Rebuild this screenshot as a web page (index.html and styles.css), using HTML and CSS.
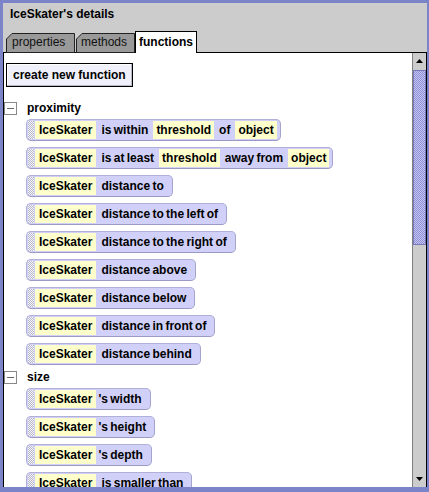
FILE: index.html
```html
<!DOCTYPE html>
<html>
<head>
<meta charset="utf-8">
<link rel="stylesheet" href="styles.css">
</head>
<body>
<div class="window">
  <div class="header">
    <div class="title">IceSkater's details</div>
    <div class="tabs">
      <div class="tab tab-props">
        <svg class="tab-shape" viewBox="0 0 69 19" preserveAspectRatio="none"><polygon points="0.5,19.5 0.5,6 6,0.5 68.5,0.5 68.5,19.5" fill="#999999" stroke="#222222" stroke-width="1"/></svg>
        <span class="tab-label">properties</span>
      </div>
      <div class="tab tab-methods">
        <svg class="tab-shape" viewBox="0 0 59 19" preserveAspectRatio="none"><polygon points="0.5,19.5 0.5,6 6,0.5 58.5,0.5 58.5,19.5" fill="#999999" stroke="#222222" stroke-width="1"/></svg>
        <span class="tab-label">methods</span>
      </div>
      <div class="tab-active">functions</div>
    </div>
  </div>
  <div class="panel">
    <div class="main">
      <button class="create">create new function</button>

      <div class="group">
        <div class="group-head first"><span class="toggle"><span class="minus"></span></span><span>proximity</span></div>
        <div class="blocks">
          <div class="block"><span class="grip"></span><span class="tile">IceSkater</span><span class="lbl">is within</span><span class="tile">threshold</span><span class="lbl">of</span><span class="tile">object</span></div>
          <div class="block"><span class="grip"></span><span class="tile">IceSkater</span><span class="lbl">is at least</span><span class="tile">threshold</span><span class="lbl">away from</span><span class="tile">object</span></div>
          <div class="block"><span class="grip"></span><span class="tile">IceSkater</span><span class="lbl">distance to</span></div>
          <div class="block"><span class="grip"></span><span class="tile">IceSkater</span><span class="lbl">distance to the left of</span></div>
          <div class="block"><span class="grip"></span><span class="tile">IceSkater</span><span class="lbl">distance to the right of</span></div>
          <div class="block"><span class="grip"></span><span class="tile">IceSkater</span><span class="lbl">distance above</span></div>
          <div class="block"><span class="grip"></span><span class="tile">IceSkater</span><span class="lbl">distance below</span></div>
          <div class="block"><span class="grip"></span><span class="tile">IceSkater</span><span class="lbl">distance in front of</span></div>
          <div class="block"><span class="grip"></span><span class="tile">IceSkater</span><span class="lbl">distance behind</span></div>
        </div>
      </div>

      <div class="group">
        <div class="group-head"><span class="toggle"><span class="minus"></span></span><span>size</span></div>
        <div class="blocks">
          <div class="block"><span class="grip"></span><span class="tile">IceSkater</span><span class="lbl poss">'s width</span></div>
          <div class="block"><span class="grip"></span><span class="tile">IceSkater</span><span class="lbl poss">'s height</span></div>
          <div class="block"><span class="grip"></span><span class="tile">IceSkater</span><span class="lbl poss">'s depth</span></div>
          <div class="block"><span class="grip"></span><span class="tile">IceSkater</span><span class="lbl">is smaller than</span></div>
        </div>
      </div>
    </div>
    <div class="scrollbar">
      <div class="sb-btn"><svg width="7" height="4" viewBox="0 0 7 4"><polygon points="3.5,0 7,4 0,4" fill="#000"/></svg></div>
      <div class="sb-thumb"></div>
      <div class="sb-track"></div>
      <div class="sb-btn"><svg width="7" height="4" viewBox="0 0 7 4"><polygon points="0,0 7,0 3.5,4" fill="#000"/></svg></div>
    </div>
  </div>
</div>
</body>
</html>
```

FILE: styles.css
```css
html, body {
  margin: 0;
  padding: 0;
}
body {
  background: #7b83c9;
  width: 429px;
  height: 492px;
  overflow: hidden;
  font-family: "Liberation Sans", Arial, sans-serif;
  font-size: 12px;
  color: #000;
}
.window {
  margin: 3px 0 0 3px;
  width: 424px;
  height: 484px;
  display: flex;
  flex-direction: column;
  background: #cccccc;
}
.header {
  height: 49px;
  display: flex;
  flex-direction: column;
  flex: none;
}
.title {
  font-weight: bold;
  padding: 4px 0 0 7px;
  line-height: 14px;
}
.tabs {
  margin-top: auto;
  display: flex;
  align-items: flex-end;
  padding-left: 3px;
  height: 22px;
}
.tab {
  position: relative;
  height: 19px;
  line-height: 19px;
  box-sizing: border-box;
}
.tab-props { width: 69px; padding-left: 6px; }
.tab-methods { width: 59px; padding-left: 5px; margin-left: 1px; }
.tab-shape {
  position: absolute;
  left: 0;
  top: 0;
  width: 100%;
  height: 100%;
  overflow: visible;
}
.tab-label {
  position: relative;
  color: #111;
}
.tab-active {
  position: relative;
  z-index: 1;
  width: 62px;
  height: 22px;
  margin-bottom: -1px;
  box-sizing: border-box;
  background: #fff;
  border: 1px solid #000;
  border-bottom: none;
  font-weight: bold;
  text-align: center;
  line-height: 21px;
}
.panel {
  flex: 1;
  min-height: 0;
  display: flex;
  background: #fff;
  border-top: 1px solid #000;
  border-left: 1px solid #000;
  border-right: 1px solid #000;
}
.main {
  flex: 1;
  overflow: hidden;
  padding-top: 10px;
}
.create {
  display: block;
  margin: 0 0 0 2px;
  height: 24px;
  padding: 0 6px;
  border: 1px solid #000;
  background: #f0f0fa;
  font-family: "Liberation Sans", Arial, sans-serif;
  font-weight: bold;
  font-size: 12px;
  color: #000;
  box-shadow: inset -1px -1px 0 #b8b8c8, inset 1px 1px 0 #ffffff;
}
.group-head {
  height: 22px;
  display: flex;
  align-items: center;
  font-weight: bold;
  margin-top: 1px;
}
.group-head.first {
  margin-top: 10px;
}
.toggle {
  width: 13px;
  height: 13px;
  box-sizing: border-box;
  border: 1px solid #888;
  background: #fff;
  margin-right: 10px;
  display: flex;
  align-items: center;
  justify-content: center;
}
.minus {
  width: 7px;
  height: 1px;
  background: #666;
}
.blocks {
  display: flex;
  flex-direction: column;
  align-items: flex-start;
  gap: 6px;
  padding-left: 22px;
}
.block {
  height: 22px;
  box-sizing: border-box;
  display: flex;
  align-items: center;
  padding: 0 3px 0 1px;
  border: 1px solid #b0b0d8;
  border-bottom-color: #9a9ac4;
  border-right-color: #a4a4cc;
  border-radius: 5px;
  background: #d0d0f8;
  white-space: nowrap;
  font-weight: bold;
}
.grip {
  width: 6px;
  height: 18px;
  margin-right: 1px;
  background: repeating-conic-gradient(#b8b8c8 0 25%, #f4f4fc 0 50%) 0 0 / 2px 2px;
}
.tile {
  height: 18px;
  line-height: 18px;
  padding: 0 3px;
  background: #ffffcc;
}
.grip + .tile {
  padding: 0 4px;
}
.lbl {
  margin: 0 5px;
  word-spacing: -1px;
}
.lbl.poss {
  margin-left: 2px;
}
.scrollbar {
  width: 13px;
  flex: none;
  display: flex;
  flex-direction: column;
  border-left: 1px solid #808080;
  background: #cccccc;
}
.sb-btn {
  height: 16px;
  flex: none;
  display: flex;
  align-items: center;
  justify-content: center;
  background: #cccccc;
}
.sb-thumb {
  height: 175px;
  flex: none;
  margin-top: 1px;
  box-sizing: border-box;
  border: 1px solid #7878b8;
  background: repeating-conic-gradient(#9090d4 0 25%, #c4c4f4 0 50%) 0 0 / 2px 2px;
}
.sb-track {
  flex: 1;
}
```
